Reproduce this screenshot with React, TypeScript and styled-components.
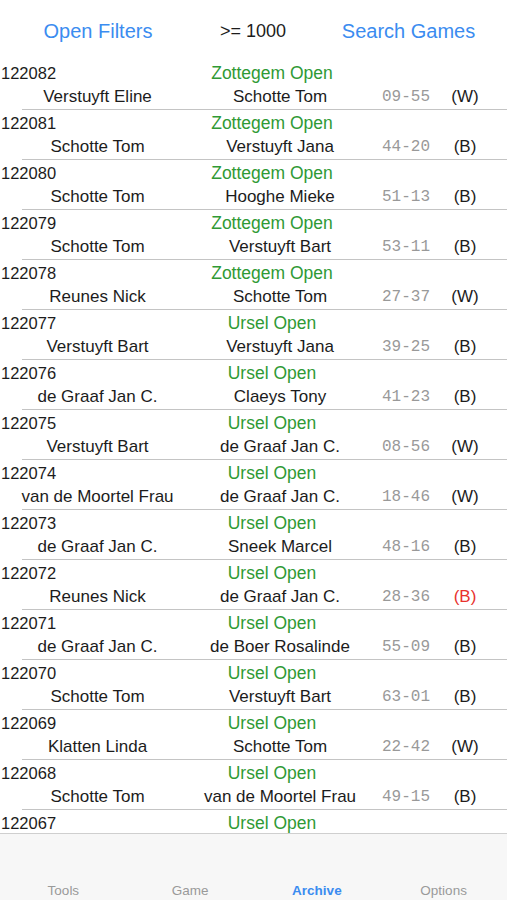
import styled, { createGlobalStyle } from "styled-components";

const GlobalStyle = createGlobalStyle`
  html, body {
    margin: 0;
    padding: 0;
    background: #ffffff;
  }
  body {
    font-family: "Liberation Sans", Arial, sans-serif;
  }
`;

interface Game {
  id: number;
  event: string;
  white?: string;
  black?: string;
  score?: string;
  side?: "W" | "B";
  alert?: boolean;
}

// the last game slides under the tab bar, only its first line shows
const games: Game[] = [
  { id: 122082, event: "Zottegem Open", white: "Verstuyft Eline", black: "Schotte Tom", score: "09-55", side: "W" },
  { id: 122081, event: "Zottegem Open", white: "Schotte Tom", black: "Verstuyft Jana", score: "44-20", side: "B" },
  { id: 122080, event: "Zottegem Open", white: "Schotte Tom", black: "Hooghe Mieke", score: "51-13", side: "B" },
  { id: 122079, event: "Zottegem Open", white: "Schotte Tom", black: "Verstuyft Bart", score: "53-11", side: "B" },
  { id: 122078, event: "Zottegem Open", white: "Reunes Nick", black: "Schotte Tom", score: "27-37", side: "W" },
  { id: 122077, event: "Ursel Open", white: "Verstuyft Bart", black: "Verstuyft Jana", score: "39-25", side: "B" },
  { id: 122076, event: "Ursel Open", white: "de Graaf Jan C.", black: "Claeys Tony", score: "41-23", side: "B" },
  { id: 122075, event: "Ursel Open", white: "Verstuyft Bart", black: "de Graaf Jan C.", score: "08-56", side: "W" },
  { id: 122074, event: "Ursel Open", white: "van de Moortel Frau", black: "de Graaf Jan C.", score: "18-46", side: "W" },
  { id: 122073, event: "Ursel Open", white: "de Graaf Jan C.", black: "Sneek Marcel", score: "48-16", side: "B" },
  { id: 122072, event: "Ursel Open", white: "Reunes Nick", black: "de Graaf Jan C.", score: "28-36", side: "B", alert: true },
  { id: 122071, event: "Ursel Open", white: "de Graaf Jan C.", black: "de Boer Rosalinde", score: "55-09", side: "B" },
  { id: 122070, event: "Ursel Open", white: "Schotte Tom", black: "Verstuyft Bart", score: "63-01", side: "B" },
  { id: 122069, event: "Ursel Open", white: "Klatten Linda", black: "Schotte Tom", score: "22-42", side: "W" },
  { id: 122068, event: "Ursel Open", white: "Schotte Tom", black: "van de Moortel Frau", score: "49-15", side: "B" },
  { id: 122067, event: "Ursel Open" },
];

const tabs = ["Tools", "Game", "Archive", "Options"];

export default function App() {
  return (
    <Screen>
      <GlobalStyle />
      <Header>
        <HeaderButton>Open Filters</HeaderButton>
        <FilterValue>&gt;= 1000</FilterValue>
        <HeaderButton>Search Games</HeaderButton>
      </Header>
      <List>
        {games.map((g) => (
          <Row key={g.id}>
            <TopLine>
              <GameId>{g.id}</GameId>
              <Event>{g.event}</Event>
            </TopLine>
            {g.white && (
              <BottomLine>
                <Player>{g.white}</Player>
                <Player>{g.black}</Player>
                <Score>{g.score}</Score>
                <Side alert={g.alert}>({g.side})</Side>
              </BottomLine>
            )}
          </Row>
        ))}
      </List>
      <TabBar>
        {tabs.map((t) => (
          <Tab key={t} active={t === "Archive"}>
            {t}
          </Tab>
        ))}
      </TabBar>
    </Screen>
  );
}

const Screen = styled.div`
  width: 507px;
  height: 900px;
  display: flex;
  flex-direction: column;
  overflow: hidden;
  background: #ffffff;
`;

const Header = styled.div`
  height: 60px;
  flex-shrink: 0;
  display: grid;
  grid-template-columns: 196px 114px 1fr;
  align-items: center;
  padding-top: 3px;
  box-sizing: border-box;
`;

const HeaderButton = styled.span`
  text-align: center;
  font-size: 20px;
  color: #3b8cf0;
`;

const FilterValue = styled.span`
  text-align: center;
  font-size: 18px;
  color: #1c1c1c;
`;

const List = styled.div`
  flex: 1;
  overflow: hidden;
`;

const Row = styled.div`
  height: 50px;
  box-sizing: border-box;
  position: relative;
  &::after {
    content: "";
    position: absolute;
    left: 22px;
    right: 0;
    bottom: 0;
    height: 1px;
    background: #c4c4c4;
  }
`;

const TopLine = styled.div`
  height: 26px;
  display: grid;
  grid-template-columns: 195px 154px;
  align-items: center;
`;

const GameId = styled.span`
  padding-left: 1px;
  font-size: 16.5px;
  color: #1c1c1c;
`;

const Event = styled.span`
  text-align: center;
  font-size: 17.5px;
  color: #2f9a35;
  white-space: nowrap;
`;

const BottomLine = styled.div`
  height: 22px;
  display: grid;
  grid-template-columns: 195px 170px 82px 36px;
  align-items: center;
`;

const Player = styled.span`
  text-align: center;
  font-size: 17px;
  color: #1c1c1c;
  white-space: nowrap;
`;

const Score = styled.span`
  text-align: center;
  font-family: "Liberation Mono", "Courier New", monospace;
  font-size: 16px;
  color: #999999;
`;

const Side = styled.span<{ alert?: boolean }>`
  text-align: center;
  font-size: 17px;
  color: ${({ alert }) => (alert ? "#e8312d" : "#1c1c1c")};
`;

const TabBar = styled.div`
  height: 67px;
  flex-shrink: 0;
  display: grid;
  grid-template-columns: repeat(4, 1fr);
  align-items: end;
  background: #f7f7f7;
  border-top: 1px solid #cfcfcf;
  box-sizing: border-box;
  padding-bottom: 2px;
`;

const Tab = styled.span<{ active?: boolean }>`
  text-align: center;
  font-size: 13.5px;
  font-weight: ${({ active }) => (active ? 700 : 400)};
  color: ${({ active }) => (active ? "#3b8cf0" : "#9a9a9a")};
`;
